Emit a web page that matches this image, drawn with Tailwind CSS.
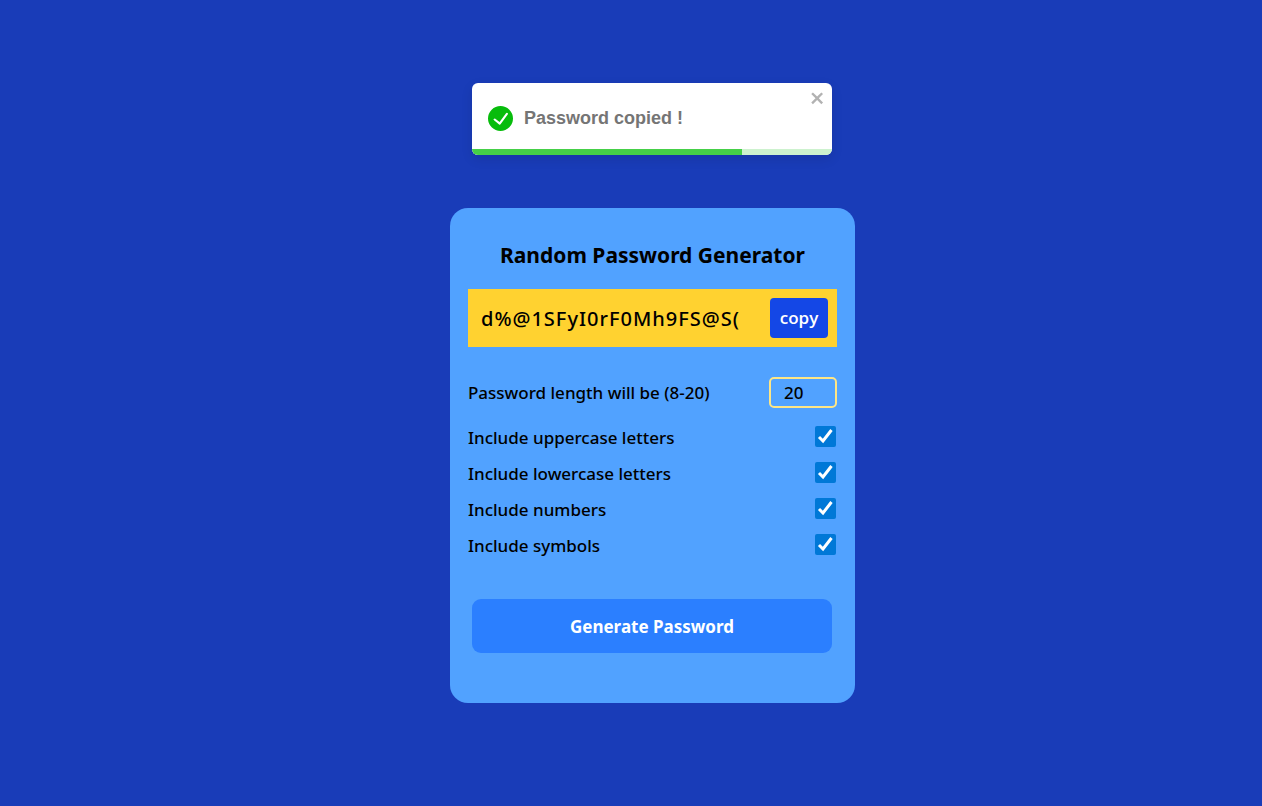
<!DOCTYPE html>
<html lang="en">
<head>
<meta charset="utf-8">
<meta name="viewport" content="width=device-width, initial-scale=1">
<title>Random Password Generator</title>
<script src="https://cdn.jsdelivr.net/npm/@tailwindcss/browser@4"></script>
</head>
<body class="min-h-screen bg-[#193cb8] font-['Segoe_UI','Noto_Sans',sans-serif] text-black">
<div class="flex flex-col items-center pt-[83px] pb-8 md:pl-[43px]">
  <div class="w-full max-w-[405px] pr-[23px] pl-[22px]">
  <div role="alert" class="overflow-hidden rounded-md bg-white shadow-[0_4px_12px_rgba(0,0,0,0.1)]">
    <div class="flex h-[66px] items-start justify-between pl-4">
      <div class="flex items-center gap-[11px] pt-[23px]">
        <svg class="size-[25px]" viewBox="0 0 24 24" fill="#07bc0c" aria-hidden="true"><path d="M12 0a12 12 0 1012 12A12.014 12.014 0 0012 0zm6.927 8.2l-6.845 9.289a1.011 1.011 0 01-1.43.188l-4.888-3.908a1 1 0 111.25-1.562l4.076 3.261 6.227-8.451a1 1 0 111.61 1.183z"/></svg>
        <p class="font-['Liberation_Sans',sans-serif] text-lg leading-[23px] font-bold text-[#757575]">Password copied !</p>
      </div>
      <button type="button" aria-label="close" class="px-[6px] pt-[6px] text-black/30">
        <svg class="h-[18px] w-4" viewBox="0 0 14 16" fill="currentColor" aria-hidden="true"><path fill-rule="evenodd" d="M7.71 8.23l3.75 3.75-1.48 1.48-3.75-3.75-3.75 3.75L1 11.98l3.75-3.75L1 4.48 2.48 3l3.75 3.75L9.98 3l1.48 1.48-3.75 3.75z"/></svg>
      </button>
    </div>
    <div class="h-[6px] bg-[#cdf2ce]"><div class="h-full w-3/4 bg-[#45d048]"></div></div>
  </div>
  </div>

  <main class="mt-[53px] w-full max-w-[405px] rounded-[18px] bg-[#51a2ff] px-[18px] pt-[30px] pb-[50px]">
    <h1 class="pt-px text-center text-[21px] leading-8 font-bold">Random Password Generator</h1>
    <div class="mt-[18px] flex h-[58px] items-center justify-between bg-[#ffd230] pr-[9px] pl-[13px]">
      <output class="pt-[2px] text-xl font-medium tracking-wider">d%@1SFyI0rF0Mh9FS@S(</output>
      <button type="button" class="h-10 w-[58px] rounded bg-[#1447e6] pb-px font-['Segoe_UI','Open_Sans',sans-serif] text-[17px] font-semibold text-white">copy</button>
    </div>
    <div class="mt-[30px] flex items-center justify-between text-[17px] font-medium">
      <label for="length">Password length will be (8-20)</label>
      <input id="length" type="number" min="8" max="20" value="20" class="h-[31px] w-[68px] rounded-[5px] border-2 border-[#fee685] bg-transparent pl-[13px]">
    </div>
    <div class="mt-[12px] text-[17px] font-medium">
      <div class="flex h-9 items-center justify-between"><label for="upper">Include uppercase letters</label><input id="upper" type="checkbox" checked class="mr-px mb-1 size-[21px] appearance-none rounded-xs bg-[#0078d7] bg-[url('data:image/svg+xml,%3Csvg%20xmlns=%22http://www.w3.org/2000/svg%22%20viewBox=%220%200%2021%2021%22%3E%3Cpath%20d=%22M4%2011l4%204L16.5%204%22%20fill=%22none%22%20stroke=%22white%22%20stroke-width=%223%22/%3E%3C/svg%3E')]"></div>
      <div class="flex h-9 items-center justify-between"><label for="lower">Include lowercase letters</label><input id="lower" type="checkbox" checked class="mr-px mb-1 size-[21px] appearance-none rounded-xs bg-[#0078d7] bg-[url('data:image/svg+xml,%3Csvg%20xmlns=%22http://www.w3.org/2000/svg%22%20viewBox=%220%200%2021%2021%22%3E%3Cpath%20d=%22M4%2011l4%204L16.5%204%22%20fill=%22none%22%20stroke=%22white%22%20stroke-width=%223%22/%3E%3C/svg%3E')]"></div>
      <div class="flex h-9 items-center justify-between"><label for="numbers">Include numbers</label><input id="numbers" type="checkbox" checked class="mr-px mb-1 size-[21px] appearance-none rounded-xs bg-[#0078d7] bg-[url('data:image/svg+xml,%3Csvg%20xmlns=%22http://www.w3.org/2000/svg%22%20viewBox=%220%200%2021%2021%22%3E%3Cpath%20d=%22M4%2011l4%204L16.5%204%22%20fill=%22none%22%20stroke=%22white%22%20stroke-width=%223%22/%3E%3C/svg%3E')]"></div>
      <div class="flex h-9 items-center justify-between"><label for="symbols">Include symbols</label><input id="symbols" type="checkbox" checked class="mr-px mb-1 size-[21px] appearance-none rounded-xs bg-[#0078d7] bg-[url('data:image/svg+xml,%3Csvg%20xmlns=%22http://www.w3.org/2000/svg%22%20viewBox=%220%200%2021%2021%22%3E%3Cpath%20d=%22M4%2011l4%204L16.5%204%22%20fill=%22none%22%20stroke=%22white%22%20stroke-width=%223%22/%3E%3C/svg%3E')]"></div>
    </div>
    <div class="mt-[35px] pr-[5px] pl-1">
      <button type="button" class="h-[54px] w-full rounded-[9px] bg-[#2b7fff] pt-px text-[17px] font-bold text-white">Generate Password</button>
    </div>
  </main>
</div>
</body>
</html>
